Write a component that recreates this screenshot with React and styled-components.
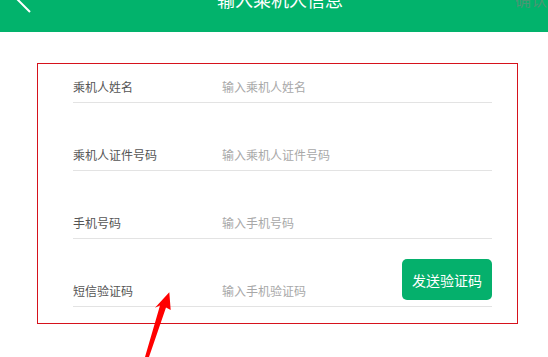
import React from "react";
import styled, { createGlobalStyle } from "styled-components";

const GlobalStyle = createGlobalStyle`
  html, body { margin: 0; padding: 0; background: #fff; }
  body { font-family: "Noto Sans CJK SC", "Noto Sans", sans-serif; }
`;

const Page = styled.div`
  position: relative;
  width: 548px;
  height: 357px;
  overflow: hidden;
  background: #fff;
`;

const Header = styled.header`
  height: 32px;
  background: #02b36c;
  overflow: hidden;
`;

const Bar = styled.div`
  display: flex;
  align-items: center;
  height: 28px;
  margin-top: -15px;
`;

const BackButton = styled.div`
  width: 45px;
  flex-shrink: 0;
  padding-left: 15px;
  box-sizing: border-box;
  display: flex;
  align-items: center;
`;

const Title = styled.h1`
  flex: 1;
  margin: 0;
  text-align: center;
  color: #fff;
  font-size: 18px;
  font-weight: 400;
  line-height: 28px;
`;

const Confirm = styled.span`
  width: 33px;
  flex-shrink: 0;
  color: #4a9674;
  font-size: 16px;
  line-height: 28px;
  white-space: nowrap;
`;

const Form = styled.form`
  margin: 31px 0 0 37px;
  width: 481px;
  box-sizing: border-box;
  border-width: 1px;
  border-style: solid;
  border-color: rgb(214, 18, 28);
  padding: 0 25px 16px 35px;
  display: flex;
  flex-direction: column;
  gap: 29px;
`;

const Row = styled.div`
  height: 39px;
  box-sizing: border-box;
  border-bottom: 1px solid #e3e3e3;
  display: flex;
  align-items: flex-end;
`;

const Label = styled.label`
  width: 149px;
  flex-shrink: 0;
  color: #555;
  font-size: 12px;
  line-height: 30px;
`;

const Input = styled.input`
  flex: 1;
  min-width: 0;
  border: none;
  outline: none;
  padding: 0;
  background: transparent;
  font-family: inherit;
  font-size: 12px;
  line-height: 30px;
  height: 30px;
  color: #333;
  &::placeholder { color: #a8a8a8; }
`;

const SendButton = styled.button`
  flex-shrink: 0;
  width: 90px;
  height: 41px;
  margin-bottom: 6px;
  border: none;
  border-radius: 5px;
  background: #05b06c;
  color: #fff;
  font-family: inherit;
  font-size: 14px;
  padding: 0;
`;

const Pointer = styled.svg`
  position: absolute;
  left: 140px;
  top: 288px;
`;

const fields = [
  { label: "乘机人姓名", placeholder: "输入乘机人姓名" },
  { label: "乘机人证件号码", placeholder: "输入乘机人证件号码" },
  { label: "手机号码", placeholder: "输入手机号码" },
  { label: "短信验证码", placeholder: "输入手机验证码", send: true },
];

export default function App() {
  return (
    <Page>
      <GlobalStyle />
      <Header>
        <Bar>
          <BackButton>
            <svg width="16" height="28" viewBox="0 0 16 28">
              <path d="M15 1 L2 14 L15 27" fill="none" stroke="#fff" strokeWidth="2" />
            </svg>
          </BackButton>
          <Title>输入乘机人信息</Title>
          <Confirm>确认</Confirm>
        </Bar>
      </Header>
      <Form>
        {fields.map((f) => (
          <Row key={f.label}>
            <Label>{f.label}</Label>
            <Input placeholder={f.placeholder} />
            {f.send && <SendButton type="button">发送验证码</SendButton>}
          </Row>
        ))}
      </Form>
      <Pointer width="35" height="69" viewBox="0 0 35 69">
        <polygon
          points="29.3,4.3 30.7,22 26,19.5 9,69 5,69 20,17.5 15,19.7"
          fill="#ff0000"
        />
      </Pointer>
    </Page>
  );
}
